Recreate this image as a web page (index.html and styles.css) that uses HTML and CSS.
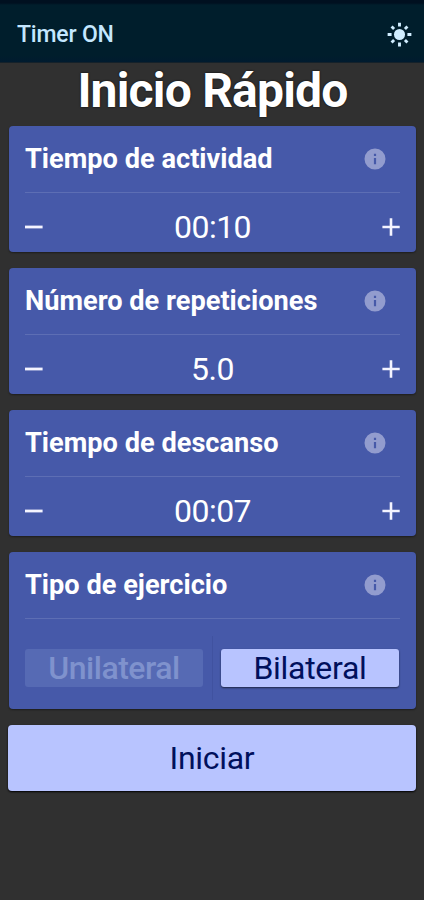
FILE: index.html
```html
<!DOCTYPE html>
<html lang="es">
<head>
    <meta charset="UTF-8">
    <meta name="viewport" content="width=device-width, initial-scale=1.0">
    <title>Timer ON</title>
    <link rel="stylesheet" href="styles.css">
</head>
<body>
    <svg class="symbols" width="0" height="0">
        <symbol id="info" viewBox="0 0 22 22">
            <path fill-rule="evenodd" d="M11 .5a10.5 10.5 0 1 0 0 21a10.5 10.5 0 0 0 0-21zM9.9 5.8h2.2v2.2h-2.2zM9.9 9.9h2.2v6.3h-2.2z"/>
        </symbol>
        <symbol id="minus" viewBox="0 0 18 18">
            <path d="M0 7.6h17.6v2.8H0z"/>
        </symbol>
        <symbol id="plus" viewBox="0 0 18 18">
            <path d="M0.4 7.7h7.3V0.3h2.6v7.4h7.4v2.6h-7.4v7.4H7.7v-7.4H0.4z"/>
        </symbol>
    </svg>

    <header class="topbar">
        <span class="app-name">Timer ON</span>
        <svg class="sun" viewBox="0 0 24 24">
            <circle cx="12" cy="12" r="5.3"/>
            <path d="M12 0.6v3.8M12 19.6v3.8M0.6 12h3.8M19.6 12h3.8M4.4 4.4l2.4 2.4M17.2 17.2l2.4 2.4M4.4 19.6l2.4-2.4M17.2 6.8l2.4-2.4"/>
        </svg>
    </header>

    <main class="content">
        <h1>Inicio Rápido</h1>

        <section class="card">
            <div class="card-head">
                <h2>Tiempo de actividad</h2>
                <svg class="info"><use href="#info"/></svg>
            </div>
            <div class="stepper">
                <button class="step-btn" aria-label="Menos"><svg><use href="#minus"/></svg></button>
                <span class="value">00:10</span>
                <button class="step-btn" aria-label="Más"><svg><use href="#plus"/></svg></button>
            </div>
        </section>

        <section class="card">
            <div class="card-head">
                <h2>Número de repeticiones</h2>
                <svg class="info"><use href="#info"/></svg>
            </div>
            <div class="stepper">
                <button class="step-btn" aria-label="Menos"><svg><use href="#minus"/></svg></button>
                <span class="value">5.0</span>
                <button class="step-btn" aria-label="Más"><svg><use href="#plus"/></svg></button>
            </div>
        </section>

        <section class="card">
            <div class="card-head">
                <h2>Tiempo de descanso</h2>
                <svg class="info"><use href="#info"/></svg>
            </div>
            <div class="stepper">
                <button class="step-btn" aria-label="Menos"><svg><use href="#minus"/></svg></button>
                <span class="value">00:07</span>
                <button class="step-btn" aria-label="Más"><svg><use href="#plus"/></svg></button>
            </div>
        </section>

        <section class="card card-type">
            <div class="card-head">
                <h2>Tipo de ejercicio</h2>
                <svg class="info"><use href="#info"/></svg>
            </div>
            <div class="options">
                <button class="option disabled">Unilateral</button>
                <span class="divider"></span>
                <button class="option selected">Bilateral</button>
            </div>
        </section>

        <button class="start-btn">Iniciar</button>
    </main>
</body>
</html>
```
FILE: styles.css
```css
* {
    margin: 0;
    padding: 0;
    box-sizing: border-box;
    font-family: Roboto, "Liberation Sans", sans-serif;
}

body {
    min-height: 900px;
    background-color: #303030;
    color: white;
}

button {
    border: none;
    background: none;
    cursor: pointer;
}

.symbols {
    display: block;
}

.topbar {
    height: 63px;
    padding: 7px 12px 0 17px;
    display: flex;
    justify-content: space-between;
    align-items: center;
    background: linear-gradient(#001020 0, #001020 3px, #001e2c 5px, #001e2c 56px, #001a30 63px);
    border-bottom: 1px solid #14212a;
}

.app-name {
    font-size: 23px;
    font-weight: 500;
    letter-spacing: -0.2px;
    color: #c4e7ff;
}

.sun {
    width: 25px;
    height: 25px;
    fill: #d0edff;
    stroke: #d0edff;
    stroke-width: 2.8;
}

.sun circle {
    stroke: none;
}

.content {
    padding: 0 8px 0 9px;
    display: flex;
    flex-direction: column;
}

h1 {
    height: 63px;
    line-height: 55px;
    font-size: 48px;
    letter-spacing: -0.8px;
    text-align: center;
    text-shadow: 0 0 2px black;
}

.card {
    height: 126px;
    margin-bottom: 16px;
    padding: 0 16px;
    background-color: #4659a9;
    border-radius: 4px;
    box-shadow: 0 1px 2px rgba(0, 0, 0, 0.4);
}

.card-head {
    height: 67px;
    padding-right: 14px;
    display: flex;
    justify-content: space-between;
    align-items: center;
    border-bottom: 1px solid #5d6eb4;
}

h2 {
    font-size: 27.2px;
    line-height: 67px;
}

.info {
    width: 22px;
    height: 22px;
    fill: #929cce;
}

.stepper {
    height: 59px;
    padding-top: 9px;
    display: flex;
    justify-content: space-between;
    align-items: center;
}

.step-btn,
.step-btn svg {
    display: block;
    width: 18px;
    height: 18px;
    fill: #f4f4ff;
}

.value {
    font-size: 32px;
    letter-spacing: -0.5px;
}

.card-type {
    height: 157px;
}

.options {
    height: 90px;
    padding-top: 8px;
    display: flex;
    align-items: center;
}

.option {
    width: 178px;
    height: 38px;
    border-radius: 3px;
    font-size: 32px;
    line-height: 36px;
    letter-spacing: -0.3px;
}

.disabled {
    background-color: #566ab4;
    color: #7f92cd;
    font-weight: 500;
    letter-spacing: -0.5px;
}

.selected {
    background-color: #b8c4ff;
    color: #00105c;
    box-shadow: 0 1px 2px rgba(0, 0, 0, 0.6);
}

.divider {
    width: 1px;
    height: 64px;
    margin: 0 8px 0 9px;
    background-color: #4052a0;
}

.start-btn {
    height: 66px;
    margin-left: -1px;
    background-color: #b8c4ff;
    border-radius: 4px;
    box-shadow: 0 1px 2px black;
    color: #00105c;
    font-size: 32px;
    letter-spacing: -0.3px;
}
```
